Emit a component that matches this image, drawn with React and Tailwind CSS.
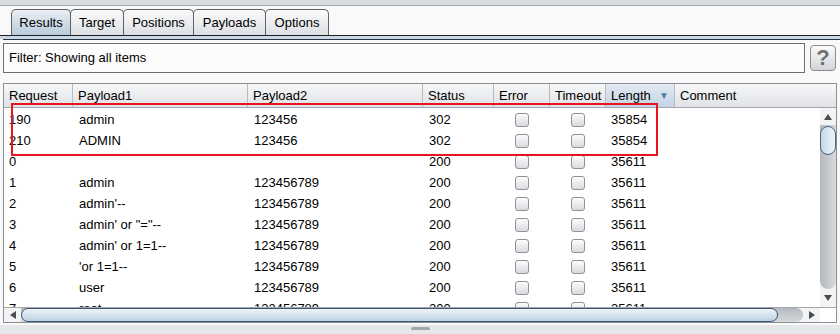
import React from "react";

const cols = [
  { key: "req", label: "Request", w: "w-[69px]" },
  { key: "p1", label: "Payload1", w: "w-[175px]" },
  { key: "p2", label: "Payload2", w: "w-[175px]" },
  { key: "status", label: "Status", w: "w-[71px]" },
  { key: "err", label: "Error", w: "w-[56px]" },
  { key: "to", label: "Timeout", w: "w-[56px]" },
  { key: "len", label: "Length", w: "w-[69px]" },
];

const rows = [
  ["190", "admin", "123456", "302", "35854"],
  ["210", "ADMIN", "123456", "302", "35854"],
  ["0", "", "", "200", "35611"],
  ["1", "admin", "123456789", "200", "35611"],
  ["2", "admin'--", "123456789", "200", "35611"],
  ["3", "admin' or \"=\"--", "123456789", "200", "35611"],
  ["4", "admin' or 1=1--", "123456789", "200", "35611"],
  ["5", "'or 1=1--", "123456789", "200", "35611"],
  ["6", "user", "123456789", "200", "35611"],
  ["7", "root", "123456789", "200", "35611"],
];

const tabs = [
  { label: "Results", w: "w-[60px]", active: true },
  { label: "Target", w: "w-[54px]" },
  { label: "Positions", w: "w-[71px]" },
  { label: "Payloads", w: "w-[73px]" },
  { label: "Options", w: "w-[64px]" },
];

function Check() {
  return (
    <div className="w-[14px] h-[14px] rounded-[3px] border border-[#8e9196] bg-linear-to-b from-[#fdfdfd] to-[#d9dbdf]" />
  );
}

function Tri({ dir }) {
  const pts = {
    up: "0,6 4,0 8,6",
    down: "0,0 8,0 4,6",
    left: "6,0 6,8 0,4",
    right: "0,0 0,8 6,4",
  }[dir];
  const vertical = dir === "up" || dir === "down";
  return (
    <svg width={vertical ? 8 : 6} height={vertical ? 6 : 8}>
      <polygon points={pts} fill="#4a4c50" />
    </svg>
  );
}

export default function App() {
  return (
    <div
      className="relative w-[840px] h-[334px] overflow-hidden bg-[#f9f9f9] text-[13px] text-black"
      style={{ fontFamily: '"Liberation Sans", Arial, sans-serif' }}
    >
      {/* top strip */}
      <div className="h-[6px] bg-[#d8dbe0] border-b border-[#a9acb2]" />

      {/* tabs */}
      <div className="flex pl-[11px] mt-[3px] h-[26px]">
        {tabs.map((t, i) => (
          <div
            key={t.label}
            className={`${t.w} ${i > 0 ? "-ml-px" : ""} h-[26px] flex items-center justify-center rounded-t-[5px] border border-b-0 border-[#5f6166] ${
              t.active
                ? "bg-linear-to-b from-[#eaeef2] to-[#b8ccdd]"
                : "bg-linear-to-b from-[#fbfbfc] to-[#dcdfe3]"
            }`}
          >
            {t.label}
          </div>
        ))}
      </div>
      <div className="h-px bg-[#1f1f1f]" />
      <div className="h-[3px] bg-[#c9d8e6]" />
      <div className="h-px bg-[#2a3340] ml-[3px]" />

      {/* filter */}
      <div className="flex items-start mt-[3px] px-[3px] gap-[5px]">
        <div className="w-[802px] h-[30px] border border-[#6d6d6d] bg-[#fcfcfc] flex items-center pl-[5px]">
          Filter: Showing all items
        </div>
        <div className="mt-[2px] w-[26px] h-[26px] rounded-[4px] border border-[#8b8d91] bg-linear-to-b from-[#fbfbfb] to-[#d3d5d9] flex items-center justify-center text-[22px] font-bold text-[#6e7074] leading-none">
          ?
        </div>
      </div>

      {/* table */}
      <div className="ml-[3px] mt-[10px] w-[834px] border border-[#8c8f94] bg-white">
        {/* header */}
        <div className="flex h-[24px] border-b border-[#a3a6ab] bg-linear-to-b from-[#f6f7f8] to-[#e0e2e6]">
          {cols.map((c) => (
            <div
              key={c.key}
              className={`${c.w} shrink-0 flex items-center pl-[5px] border-r border-[#b7bac0] ${
                c.key === "len"
                  ? "bg-linear-to-b from-[#e2eaf2] to-[#c3d4e5] justify-between pr-[5px]"
                  : ""
              }`}
            >
              <span>{c.label}</span>
              {c.key === "len" && <span className="text-[10px] text-[#5a7da6]">▼</span>}
            </div>
          ))}
          <div className="flex-1 flex items-center pl-[5px]">Comment</div>
        </div>

        {/* body */}
        <div className="flex h-[199px]">
          <div className="w-[816px] h-[199px] overflow-hidden pt-[1px]">
            {rows.map((r) => (
              <div key={r[0]} className="flex h-[21px] items-center">
                <div className="w-[69px] pl-[5px] shrink-0">{r[0]}</div>
                <div className="w-[175px] pl-[6px] shrink-0">{r[1]}</div>
                <div className="w-[175px] pl-[6px] shrink-0">{r[2]}</div>
                <div className="w-[71px] pl-[6px] shrink-0">{r[3]}</div>
                <div className="w-[56px] shrink-0 flex justify-center">
                  <Check />
                </div>
                <div className="w-[56px] shrink-0 flex justify-center">
                  <Check />
                </div>
                <div className="w-[69px] pl-[5px] shrink-0">{r[4]}</div>
              </div>
            ))}
          </div>

          {/* vertical scrollbar */}
          <div className="w-[16px] flex flex-col bg-[#f2f3f5]">
            <div className="h-[17px] flex items-center justify-center">
              <Tri dir="up" />
            </div>
            <div className="relative flex-1 bg-linear-to-r from-[#b4b8be] to-[#d7dade] rounded-b-[8px]">
              <div className="absolute top-[1px] left-0 w-[16px] h-[29px] rounded-full border border-[#4d627c] bg-linear-to-r from-[#c5d9ea] to-[#eef4f9]" />
            </div>
            <div className="h-[18px] flex items-center justify-center">
              <Tri dir="down" />
            </div>
          </div>
        </div>

        {/* horizontal scrollbar */}
        <div className="flex h-[15px] border-t border-[#a4a7ac] bg-[#f2f3f5]">
          <div className="w-[17px] flex items-center justify-center">
            <Tri dir="left" />
          </div>
          <div className="flex w-[782px] bg-linear-to-b from-[#b5b9bf] to-[#d5d8dc] rounded-r-[8px]">
            <div className="w-[757px] h-full rounded-full border border-[#3f5470] bg-linear-to-b from-[#eef4f9] to-[#bdd2e5]" />
          </div>
          <div className="w-[17px] flex items-center justify-center">
            <Tri dir="right" />
          </div>
          <div className="flex-1 bg-white" />
        </div>
      </div>

      {/* bottom strip */}
      <div className="mt-[2px] h-[20px] bg-[#e5e7ea] flex justify-center pt-[2px]">
        <div className="w-[19px] h-[3px] rounded-full bg-[#a3a6ab]" />
      </div>

      {/* highlight box */}
      <div className="absolute left-[11px] top-[103px] w-[647px] h-[53px] border-2 border-[#e6161f]" />
    </div>
  );
}
